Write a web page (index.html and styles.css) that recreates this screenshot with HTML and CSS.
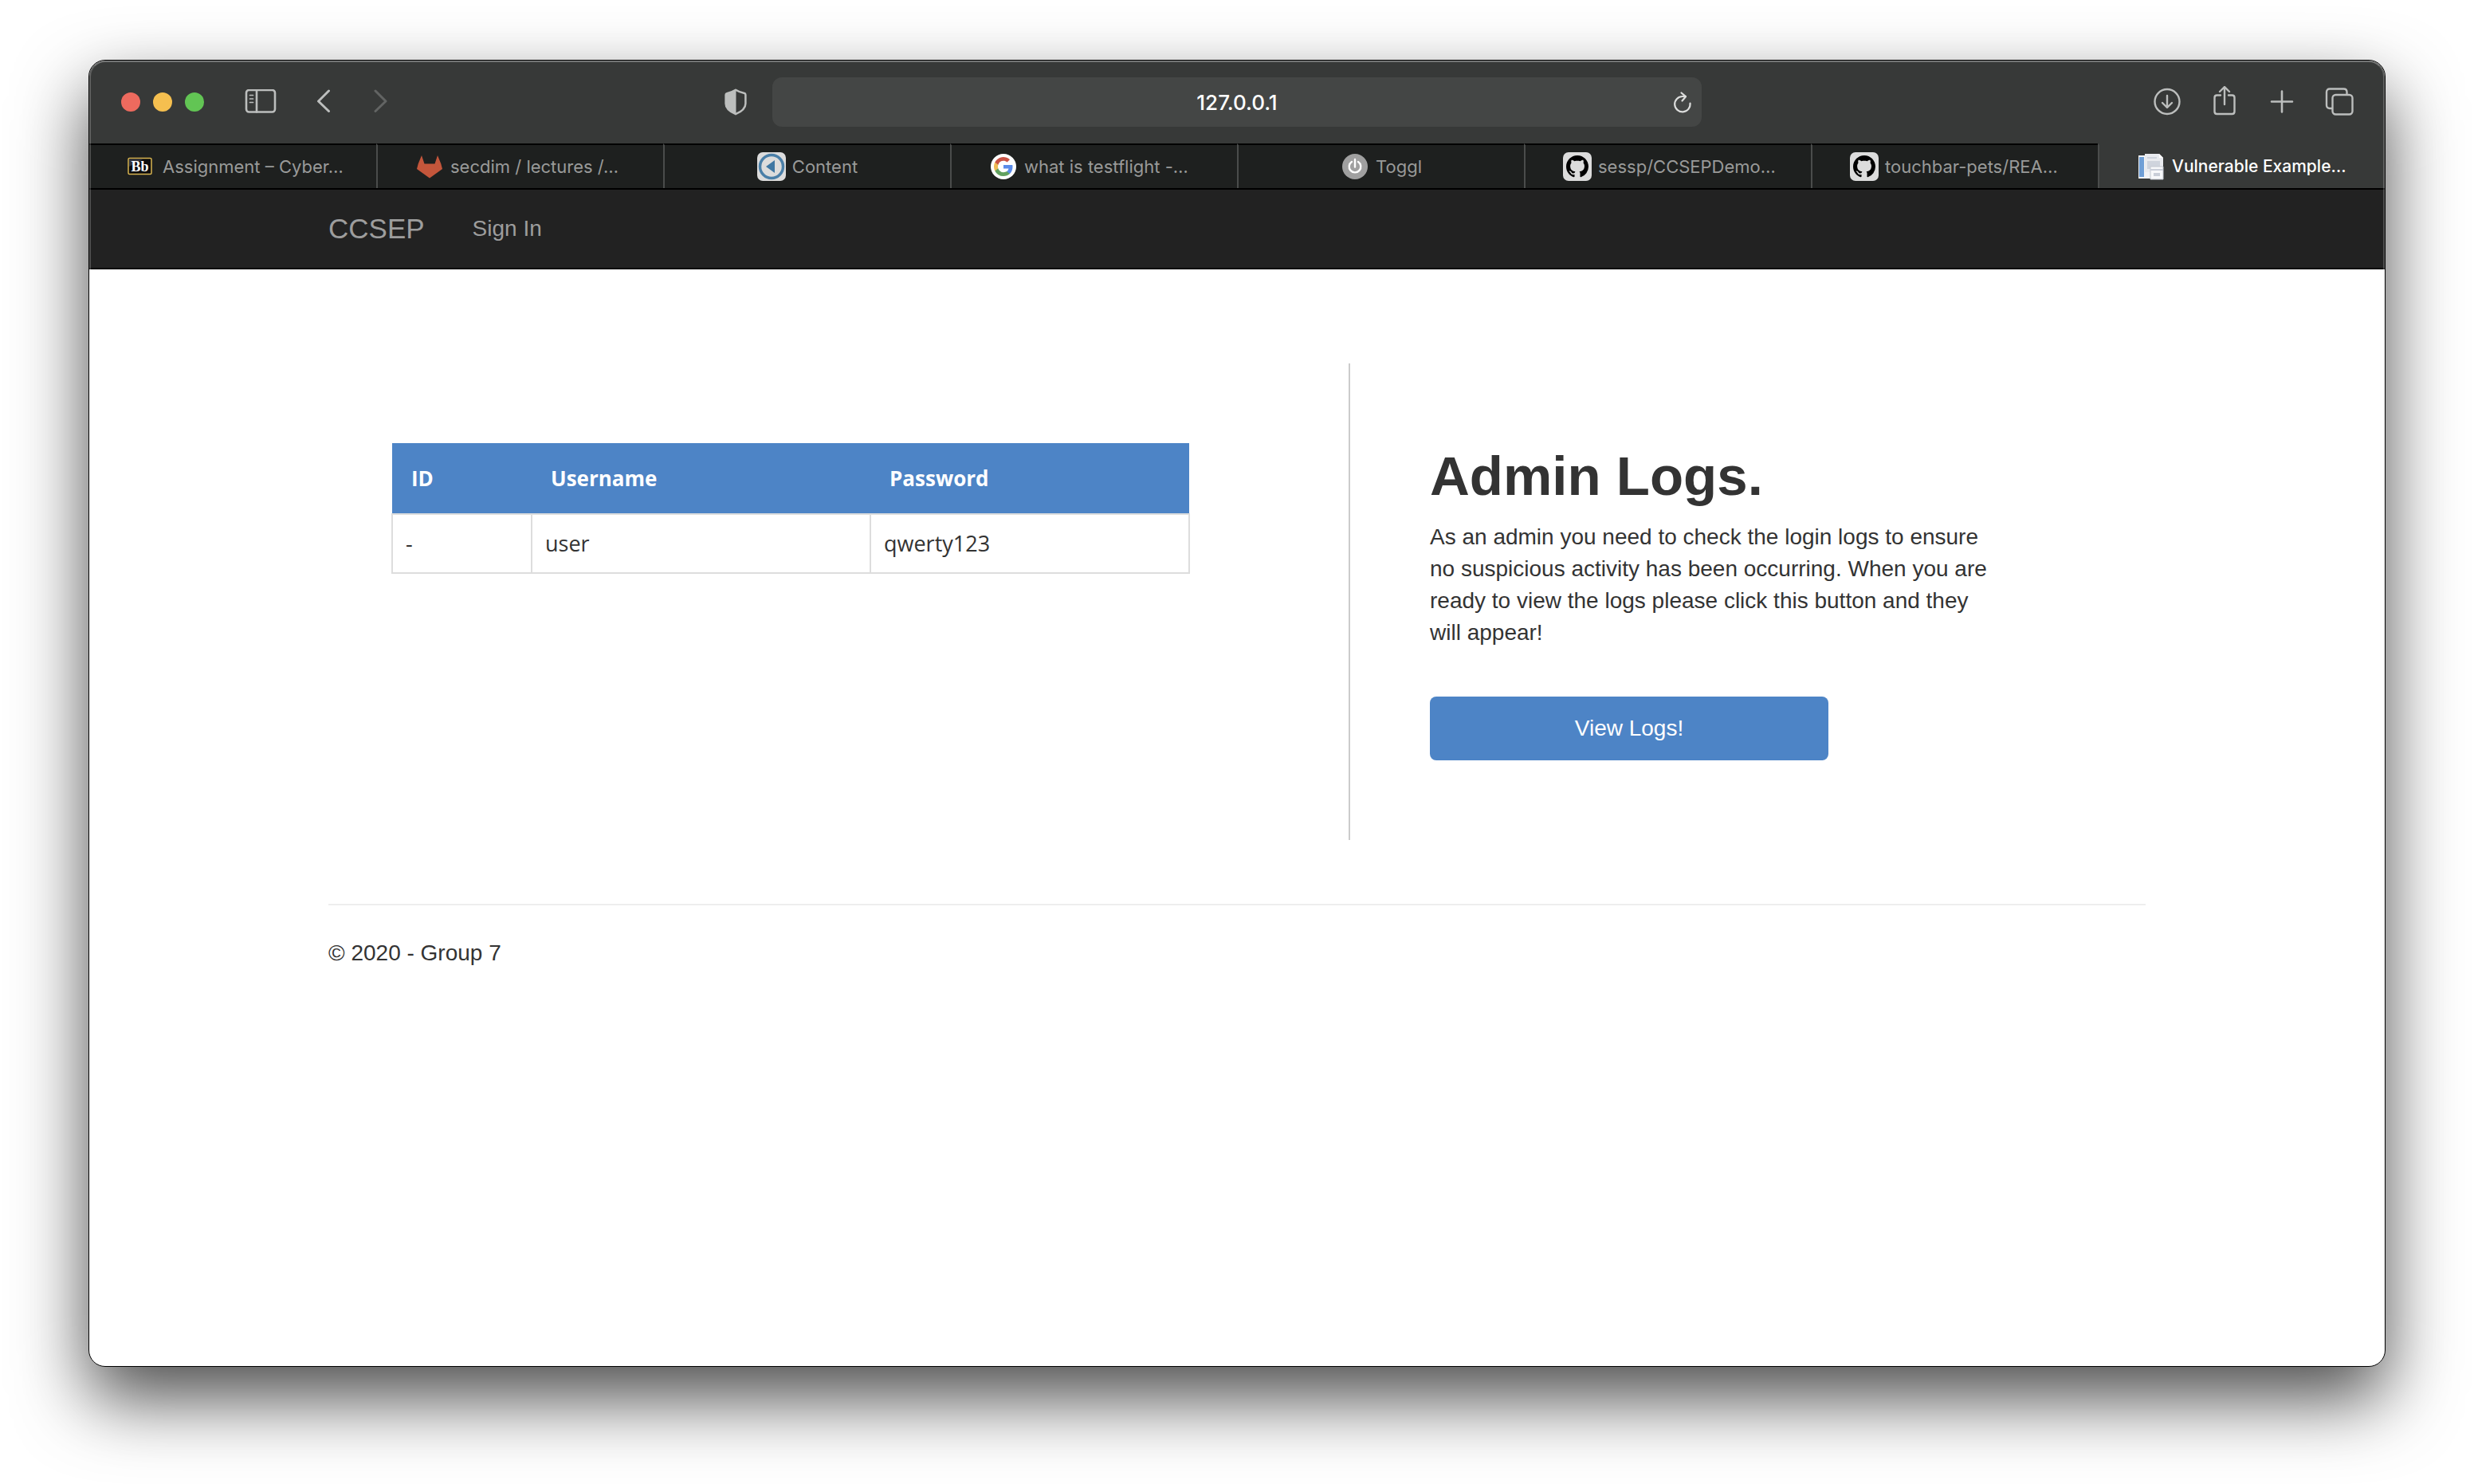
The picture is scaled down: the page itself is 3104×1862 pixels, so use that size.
FILE: index.html
```html
<!DOCTYPE html>
<html lang="en">
<head>
<meta charset="utf-8">
<meta name="viewport" content="width=device-width, initial-scale=1">
<title>Vulnerable Example</title>
<link rel="stylesheet" href="styles.css">
</head>
<body>
<svg class="symbols" aria-hidden="true">
  <symbol id="github" viewBox="0 0 36 36">
    <rect width="36" height="36" rx="7" fill="#dcdcdc"/>
    <path transform="translate(4 4) scale(1.75)" fill="#000" d="M8 0C3.58 0 0 3.58 0 8c0 3.54 2.29 6.53 5.47 7.59.4.07.55-.17.55-.38 0-.19-.01-.82-.01-1.49-2.01.37-2.53-.49-2.69-.94-.09-.23-.48-.94-.82-1.13-.28-.15-.68-.52-.01-.53.63-.01 1.08.58 1.23.82.72 1.21 1.87.87 2.33.66.07-.52.28-.87.51-1.07-1.78-.2-3.64-.89-3.64-3.95 0-.87.31-1.59.82-2.15-.08-.2-.36-1.02.08-2.12 0 0 .67-.21 2.2.82.64-.18 1.32-.27 2-.27s1.36.09 2 .27c1.53-1.04 2.2-.82 2.2-.82.44 1.1.16 1.92.08 2.12.51.56.82 1.27.82 2.15 0 3.07-1.87 3.75-3.65 3.95.29.25.54.73.54 1.48 0 1.07-.01 1.93-.01 2.2 0 .21.15.46.55.38A8.01 8.01 0 0 0 16 8c0-4.42-3.58-8-8-8z"/>
  </symbol>
</svg>

<div class="window">
  <header class="toolbar">
    <div class="tools">
      <div class="lights">
        <button class="light close" aria-label="Close"></button>
        <button class="light minimise" aria-label="Minimise"></button>
        <button class="light zoom" aria-label="Zoom"></button>
      </div>
      <button class="tool sidebar" aria-label="Show sidebar">
        <svg width="40" height="32" viewBox="0 0 40 32" fill="none" stroke="#bcbebd" stroke-width="2.6" stroke-linecap="round"><rect x="2" y="1" width="36" height="27.500" rx="3.500"/><path d="M15 1v27.500"/><path stroke-width="1.700" d="M6.500 7.500h4M6.500 12h4M6.500 16.500h4"/></svg>
      </button>
      <button class="tool back" aria-label="Back">
        <svg width="20" height="32" viewBox="0 0 20 32" fill="none" stroke="#bcbebd" stroke-width="3" stroke-linecap="round" stroke-linejoin="round"><path d="M16.500 2L3.500 15l13 12.500"/></svg>
      </button>
      <button class="tool" aria-label="Forward" disabled>
        <svg width="20" height="32" viewBox="0 0 20 32" fill="none" stroke="#626463" stroke-width="3" stroke-linecap="round" stroke-linejoin="round"><path d="M3 2l13 13L3 27.500"/></svg>
      </button>
    </div>

    <div class="address">
      <button class="tool" aria-label="Privacy report">
        <svg width="28" height="34" viewBox="0 0 28 34"><path fill="none" stroke="#bcbebd" stroke-width="2.500" stroke-linejoin="round" d="M14 1.800c3.500 2.200 7.500 3.600 11 4.300.9.200 1.400.8 1.400 1.800V19c0 6-5.500 10.300-12.400 13.200C7.100 29.300 1.600 25 1.600 19V7.900c0-1 .5-1.600 1.400-1.800 3.500-.7 7.500-2.100 11-4.300z"/><path fill="#bcbebd" d="M14.500 1.800v30.400C7.100 29.300 1.600 25 1.600 19V7.900c0-1 .5-1.600 1.400-1.800 3.500-.7 7.500-2.100 11.500-4.300z"/></svg>
      </button>
      <div class="field">
        <input class="url" type="text" value="127.0.0.1" aria-label="Address">
        <button class="tool reload" aria-label="Reload">
          <svg width="24" height="28" viewBox="0 0 24 28" fill="none" stroke="#dcdddc" stroke-width="2.200" stroke-linecap="round" stroke-linejoin="round"><path d="M21.500 15.500A9.700 9.700 0 1 1 12 7h4"/><path d="M10.500 2.500L16 7.200l-4.500 5.300"/></svg>
        </button>
      </div>
    </div>

    <div class="actions">
      <button class="tool" aria-label="Downloads">
        <svg width="36" height="40" viewBox="0 0 36 40" fill="none" stroke="#bcbebd" stroke-width="2.400" stroke-linecap="round" stroke-linejoin="round"><circle cx="18" cy="19.500" r="15.500"/><path d="M18 12v14.500M12 21l6 6 6-6"/></svg>
      </button>
      <button class="tool" aria-label="Share">
        <svg width="36" height="40" viewBox="0 0 36 40" fill="none" stroke="#bcbebd" stroke-width="2.400" stroke-linecap="round" stroke-linejoin="round"><path d="M13 11.500H8.500c-2 0-3 1-3 3v17.500c0 2 1 3 3 3h19c2 0 3-1 3-3V14.500c0-2-1-3-3-3H23M18 23V1.500M12 7l6-6 6 6"/></svg>
      </button>
      <button class="tool" aria-label="New tab">
        <svg width="36" height="40" viewBox="0 0 36 40" fill="none" stroke="#bcbebd" stroke-width="2.600" stroke-linecap="round"><path d="M18 6.500v26M5 19.500h26"/></svg>
      </button>
      <button class="tool" aria-label="Tab overview">
        <svg width="36" height="40" viewBox="0 0 36 40" fill="none" stroke="#bcbebd" stroke-width="2.400" stroke-linejoin="round"><rect x="9.500" y="11" width="25" height="24.500" rx="4"/><path d="M9.500 28H6c-2.500 0-4-1.500-4-4V7.500c0-2.500 1.500-4 4-4h17.500c2.500 0 4 1.500 4 4V11"/></svg>
      </button>
    </div>
  </header>

  <nav class="tabs" aria-label="Tabs">
    <a class="tab" href="#">
      <svg class="favicon" viewBox="0 0 36 36"><rect x="1" y="7.500" width="29" height="20" rx="1.500" fill="#0b0b0d" stroke="#d9b550" stroke-width="1.500"/><path d="M2 8.500h18L2 18z" fill="#33353c"/><text class="bb" x="15.500" y="24" text-anchor="middle">Bb</text></svg>
      <span class="label long">Assignment – Cyber…</span>
    </a>
    <a class="tab" href="#">
      <svg class="favicon" viewBox="0 0 36 36"><path fill="#c4563b" d="M18 32.500L2 21l1.700-6.500L8 4l3.500 10.500h13L28 4l4.300 10.500L34 21z"/></svg>
      <span class="label long">secdim / lectures /…</span>
    </a>
    <a class="tab" href="#">
      <svg class="favicon" viewBox="0 0 36 36"><rect width="36" height="36" rx="7" fill="#dcdcdc"/><circle cx="18" cy="18" r="14.500" fill="none" stroke="#4a7fa8" stroke-width="3.500"/><path fill="#3f77a3" d="M11 18L22 10v16z"/></svg>
      <span class="label">Content</span>
    </a>
    <a class="tab" href="#">
      <svg class="favicon" viewBox="0 0 36 36"><circle cx="18" cy="18" r="16" fill="#fff"/><g transform="translate(6 6)"><path fill="#5a8be8" d="M23.500 12.300c0-.8-.1-1.600-.2-2.300H12v4.500h6.500a5.500 5.500 0 0 1-2.400 3.600v3h3.900c2.200-2.100 3.500-5.200 3.500-8.800z"/><path fill="#61a15f" d="M12 24c3.200 0 6-1.100 8-2.900l-3.900-3c-1.100.7-2.500 1.200-4.100 1.200-3.100 0-5.800-2.100-6.700-5H1.300v3.100A12 12 0 0 0 12 24z"/><path fill="#eebb54" d="M5.300 14.300a7.200 7.200 0 0 1 0-4.600V6.600h-4a12 12 0 0 0 0 10.800z"/><path fill="#ca5345" d="M12 4.800c1.800 0 3.300.6 4.600 1.800L20 3.200A12 12 0 0 0 1.300 6.600l4 3.100c.9-2.900 3.600-4.900 6.700-4.900z"/></g></svg>
      <span class="label long">what is testflight -…</span>
    </a>
    <a class="tab" href="#">
      <svg class="favicon" viewBox="0 0 36 36"><circle cx="18" cy="18" r="16" fill="#a0a0a0"/><g fill="none" stroke="#fff" stroke-width="2.400" stroke-linecap="round"><path d="M14 12a7.300 7.300 0 1 0 8 0M18 9v9.500"/></g></svg>
      <span class="label">Toggl</span>
    </a>
    <a class="tab" href="#">
      <svg class="favicon"><use href="#github"/></svg>
      <span class="label long">sessp/CCSEPDemo…</span>
    </a>
    <a class="tab" href="#">
      <svg class="favicon"><use href="#github"/></svg>
      <span class="label long">touchbar-pets/REA…</span>
    </a>
    <a class="tab active" href="#" aria-current="page">
      <svg class="favicon" viewBox="0 0 36 36"><path fill="#f1f3f6" d="M2 4h22v29H2z"/><path fill="#6f9fd6" d="M3 6h6v25H3z"/><path fill="#e9ebef" d="M10 2h18l5 5v18H10z"/><path fill="#fff" d="M28 2v5h5z"/><path fill="#cfd4dd" d="M13 6h12v2H13zM13 11h16v10H13z"/><path fill="#f7f8fa" stroke="#c3c8d0" d="M17 18h16v16H17z"/><path fill="#c9ced8" d="M17 21h16v2H17zM21 26h8v4h-8z"/></svg>
      <span class="label long">Vulnerable Example…</span>
    </a>
  </nav>

  <nav class="navbar" aria-label="Site">
    <div class="container nav-row">
      <a class="brand" href="#">CCSEP</a>
      <a class="nav-link" href="#">Sign In</a>
    </div>
  </nav>

  <div class="container page">
    <main class="columns">
      <section class="users">
        <table class="user-table">
          <thead><tr><th class="col-id" scope="col">ID</th><th class="col-name" scope="col">Username</th><th scope="col">Password</th></tr></thead>
          <tbody><tr><td>-</td><td>user</td><td>qwerty123</td></tr></tbody>
        </table>
      </section>
      <section class="logs">
        <h1 class="title">Admin Logs.</h1>
        <p class="intro">As an admin you need to check the login logs to ensure no suspicious activity has been occurring. When you are ready to view the logs please click this button and they will appear!</p>
        <button class="view-logs">View Logs!</button>
      </section>
    </main>
    <footer class="footer">© 2020 - Group 7</footer>
  </div>
</div>
</body>
</html>
```
FILE: styles.css
```css
* { box-sizing: border-box; }

body {
  margin: 0;
  padding: 75px 111px 147px;
  background: #fff;
  color: #333;
  font: 28px/40px "Liberation Sans", Arial, sans-serif;
}

a { color: inherit; text-decoration: none; }
button { margin: 0; padding: 0; border: 0; background: none; font: inherit; }
svg { display: block; flex: none; }
.symbols { position: absolute; width: 0; height: 0; }

/* Browser window */
.window {
  position: relative;
  min-height: calc(100vh - 222px);
  overflow: hidden;
  border: 1px solid #000;
  border-radius: 21px;
  background: #fff;
  box-shadow: 0 40px 90px rgba(0, 0, 0, 0.7);
}
/* Light rim inside the window edge */
.window::after {
  content: "";
  position: absolute;
  inset: 0;
  border: 2px solid rgba(255, 255, 255, 0.2);
  border-top-color: rgba(255, 255, 255, 0.3);
  border-radius: 20px;
  pointer-events: none;
}

/* Toolbar */
.toolbar {
  display: grid;
  grid-template-columns: 757fr 1226px 818fr;
  align-items: center;
  height: 104px;
  padding: 0 39px 0 40px;
  background: #373938;
}
.tools, .lights, .address, .actions { display: flex; align-items: center; }
.lights { gap: 16px; }
.light { width: 24px; height: 24px; border-radius: 50%; }
.close { background: #ed6a5e; }
.minimise { background: #f5bf4f; }
.zoom { background: #62c554; }
.sidebar { margin-left: 51px; }
.back { margin: 0 52px 0 49px; }
.address { gap: 32px; }
.field {
  display: flex;
  flex: 1;
  align-items: center;
  height: 62px;
  padding: 0 12px 0 36px;
  border-radius: 12px;
  background: #444645;
}
.url {
  flex: 1;
  min-width: 0;
  padding: 2px 0 0;
  border: 0;
  outline: 0;
  background: none;
  color: #fff;
  font: 500 26px/32px Inter, sans-serif;
  text-align: center;
}
.actions { justify-content: flex-end; gap: 36px; }

/* Tabs */
.tabs {
  display: grid;
  grid-template-columns: repeat(8, 1fr);
  height: 58px;
  border-bottom: 2px solid #000;
}
.tab {
  display: flex;
  align-items: center;
  justify-content: center;
  gap: 8px;
  border-top: 2px solid #000;
  background: #1e201f;
  color: #999a99;
  font: 22px/32px Inter, sans-serif;
  white-space: nowrap;
}
.tab + .tab { border-left: 2px solid #4a4c4b; }
.tab.active {
  border-top-color: #373938;
  background: #373938;
  color: #fff;
  font-size: 21px;
  font-weight: 500;
}
.favicon { width: 36px; height: 36px; }
.bb { fill: #fff; font: 700 18px "Liberation Serif", serif; }
.long { width: 220px; }

/* Site */
.container { width: 100%; max-width: 2280px; margin: 0 auto; }
.navbar { border-bottom: 2px solid #080808; background: #222; color: #9d9d9d; }
.nav-row { display: flex; align-items: center; gap: 60px; height: 98px; }
.brand { font-size: 35px; }
.page { padding: 118px 0 60px; }
.columns { display: flex; }
.users { flex: 0 0 1280px; padding: 100px 79px; }
.user-table {
  width: 1002px;
  border-collapse: collapse;
  table-layout: fixed;
  font-family: "Open Sans", sans-serif;
}
.user-table th {
  height: 89px;
  padding: 0 24px;
  background: #4d84c6;
  color: #fff;
  font-size: 26px;
  font-weight: 700;
  text-align: left;
}
.user-table td { height: 74px; padding: 0 16px; border: 2px solid #ddd; font-size: 27px; }
.col-id { width: 175px; }
.col-name { width: 425px; }
.logs { flex: 1; padding: 100px; border-left: 2px solid #ccc; }
.title { margin: 0 0 14px; font-size: 69px; line-height: 84px; }
.intro { max-width: 720px; margin: 0 0 60px; }
.view-logs {
  width: 500px;
  height: 80px;
  border-radius: 8px;
  background: #4d84c6;
  color: #fff;
}
.footer { margin-top: 80px; padding-top: 40px; border-top: 2px solid #eee; }
```
